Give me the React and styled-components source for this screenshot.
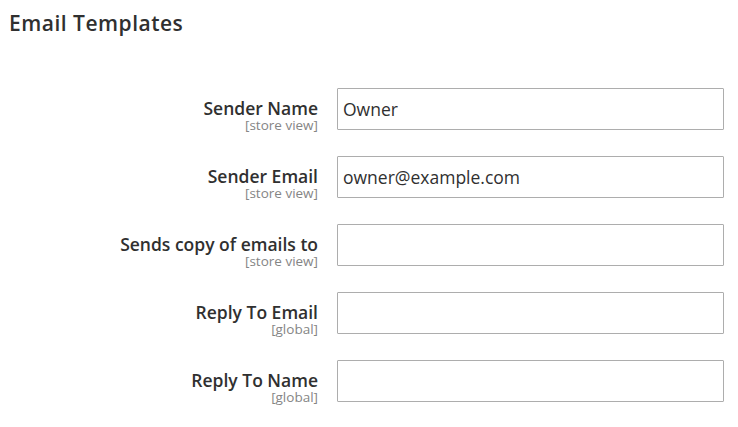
import React from "react";
import styled, { createGlobalStyle } from "styled-components";

const Global = createGlobalStyle`
  html, body { margin: 0; padding: 0; background: #fff; }
  body { font-family: "Open Sans", "Noto Sans", sans-serif; color: #303030; }
`;

const Page = styled.div`
  width: 738px;
  height: 427px;
  box-sizing: border-box;
  padding: 9px 0 0 9px;
`;

const Title = styled.h2`
  margin: 0;
  font-size: 21px;
  font-weight: 600;
  letter-spacing: 0.5px;
  line-height: 28px;
  color: #303030;
`;

const Form = styled.div`
  display: grid;
  grid-template-columns: 309px 387px;
  grid-auto-rows: 42px;
  column-gap: 19px;
  row-gap: 26px;
  margin-top: 51px;
`;

const Label = styled.div`
  text-align: right;
  padding-top: 9px;
`;

const LabelText = styled.div`
  font-size: 17.5px;
  font-weight: 600;
  line-height: 22px;
  color: #303030;
  white-space: nowrap;
`;

const Scope = styled.div`
  font-size: 13.5px;
  line-height: 13px;
  margin-top: 0;
  color: #858585;
`;

const Input = styled.input`
  box-sizing: border-box;
  width: 387px;
  height: 42px;
  border: 1px solid #adadad;
  border-radius: 1px;
  padding: 0 5px;
  font-family: "Open Sans", "Noto Sans", sans-serif;
  font-size: 17.5px;
  color: #303030;
  background: #fff;
  outline: none;
`;

const fields = [
  { label: "Sender Name", scope: "[store view]", value: "Owner" },
  { label: "Sender Email", scope: "[store view]", value: "owner@example.com" },
  { label: "Sends copy of emails to", scope: "[store view]", value: "" },
  { label: "Reply To Email", scope: "[global]", value: "" },
  { label: "Reply To Name", scope: "[global]", value: "" },
];

export default function App() {
  return (
    <>
      <Global />
      <Page>
        <Title>Email Templates</Title>
        <Form>
          {fields.map((f) => (
            <React.Fragment key={f.label}>
              <Label>
                <LabelText>{f.label}</LabelText>
                <Scope>{f.scope}</Scope>
              </Label>
              <Input type="text" defaultValue={f.value} />
            </React.Fragment>
          ))}
        </Form>
      </Page>
    </>
  );
}
